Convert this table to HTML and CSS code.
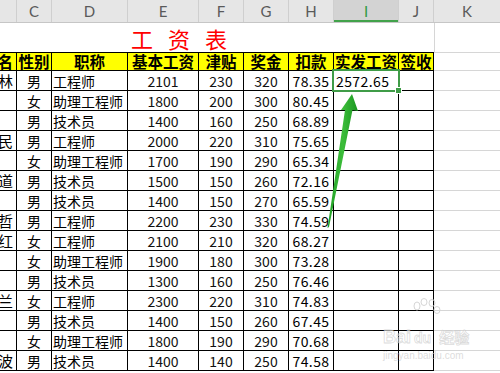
FILE: index.html
```html
<!DOCTYPE html>
<html>
<head>
<meta charset="utf-8">
<link rel="stylesheet" href="styles.css">
</head>
<body>
<div class="sheet">
  <div class="colhead">
    <div class="ch"></div><div class="ch">C</div><div class="ch">D</div><div class="ch">E</div><div class="ch">F</div><div class="ch">G</div><div class="ch">H</div><div class="ch sel">I</div><div class="ch">J</div><div class="ch last">K</div>
  </div>
  <div class="title-row">
    <div class="title"><span>工</span><span>资</span><span>表</span></div>
    <div class="k kt"></div>
  </div>
  <div class="row head">
    <div class="c b">名</div><div class="c">性别</div><div class="c">职称</div><div class="c">基本工资</div><div class="c">津贴</div><div class="c">奖金</div><div class="c">扣款</div><div class="c">实发工资</div><div class="c">签收</div><div class="k"></div>
  </div>
  <div class="row"><div class="c b">林</div><div class="c">男</div><div class="c l">工程师</div><div class="c n">2101</div><div class="c n">230</div><div class="c n">320</div><div class="c m">78.35</div><div class="c l m">2572.65</div><div class="c"></div><div class="k"></div></div>
  <div class="row"><div class="c b"></div><div class="c">女</div><div class="c l">助理工程师</div><div class="c n">1800</div><div class="c n">200</div><div class="c n">300</div><div class="c m">80.45</div><div class="c"></div><div class="c"></div><div class="k"></div></div>
  <div class="row"><div class="c b"></div><div class="c">男</div><div class="c l">技术员</div><div class="c n">1400</div><div class="c n">160</div><div class="c n">250</div><div class="c m">68.89</div><div class="c"></div><div class="c"></div><div class="k"></div></div>
  <div class="row"><div class="c b">民</div><div class="c">男</div><div class="c l">工程师</div><div class="c n">2000</div><div class="c n">220</div><div class="c n">310</div><div class="c m">75.65</div><div class="c"></div><div class="c"></div><div class="k"></div></div>
  <div class="row"><div class="c b"></div><div class="c">女</div><div class="c l">助理工程师</div><div class="c n">1700</div><div class="c n">190</div><div class="c n">290</div><div class="c m">65.34</div><div class="c"></div><div class="c"></div><div class="k"></div></div>
  <div class="row"><div class="c b">道</div><div class="c">男</div><div class="c l">技术员</div><div class="c n">1500</div><div class="c n">150</div><div class="c n">260</div><div class="c m">72.16</div><div class="c"></div><div class="c"></div><div class="k"></div></div>
  <div class="row"><div class="c b"></div><div class="c">男</div><div class="c l">技术员</div><div class="c n">1400</div><div class="c n">150</div><div class="c n">270</div><div class="c m">65.59</div><div class="c"></div><div class="c"></div><div class="k"></div></div>
  <div class="row"><div class="c b">哲</div><div class="c">男</div><div class="c l">工程师</div><div class="c n">2200</div><div class="c n">230</div><div class="c n">330</div><div class="c m">74.59</div><div class="c"></div><div class="c"></div><div class="k"></div></div>
  <div class="row"><div class="c b">红</div><div class="c">女</div><div class="c l">工程师</div><div class="c n">2100</div><div class="c n">210</div><div class="c n">320</div><div class="c m">68.27</div><div class="c"></div><div class="c"></div><div class="k"></div></div>
  <div class="row"><div class="c b"></div><div class="c">女</div><div class="c l">助理工程师</div><div class="c n">1900</div><div class="c n">180</div><div class="c n">300</div><div class="c m">73.28</div><div class="c"></div><div class="c"></div><div class="k"></div></div>
  <div class="row"><div class="c b"></div><div class="c">男</div><div class="c l">技术员</div><div class="c n">1300</div><div class="c n">160</div><div class="c n">250</div><div class="c m">76.46</div><div class="c"></div><div class="c"></div><div class="k"></div></div>
  <div class="row"><div class="c b">兰</div><div class="c">女</div><div class="c l">工程师</div><div class="c n">2300</div><div class="c n">220</div><div class="c n">310</div><div class="c m">74.83</div><div class="c"></div><div class="c"></div><div class="k"></div></div>
  <div class="row"><div class="c b"></div><div class="c">男</div><div class="c l">技术员</div><div class="c n">1400</div><div class="c n">150</div><div class="c n">260</div><div class="c m">67.45</div><div class="c"></div><div class="c"></div><div class="k"></div></div>
  <div class="row"><div class="c b"></div><div class="c">女</div><div class="c l">助理工程师</div><div class="c n">1800</div><div class="c n">190</div><div class="c n">290</div><div class="c m">70.68</div><div class="c"></div><div class="c"></div><div class="k"></div></div>
  <div class="row"><div class="c b">波</div><div class="c">男</div><div class="c l">技术员</div><div class="c n">1400</div><div class="c n">140</div><div class="c n">250</div><div class="c m">74.58</div><div class="c"></div><div class="c"></div><div class="k"></div></div>
</div>

<div class="selection"><span class="handle"></span></div>

<svg class="arrow" width="500" height="373" viewBox="0 0 500 373">
  <defs>
    <linearGradient id="g" x1="0" y1="0" x2="1" y2="0">
      <stop offset="0" stop-color="#1f9e24"/>
      <stop offset="0.5" stop-color="#3cbd3a"/>
      <stop offset="1" stop-color="#1a9620"/>
    </linearGradient>
  </defs>
  <polygon points="352,94 358,111 352.5,110 329,227 327.5,228 345,110 341,110" fill="url(#g)"/>
</svg>

<div class="watermark">
  <svg class="paw" width="30" height="28" viewBox="0 0 30 28">
    <g fill="none" stroke="#d6d6d6" stroke-width="1">
      <ellipse cx="6" cy="8" rx="3" ry="4"/>
      <ellipse cx="13" cy="4" rx="3" ry="3.5"/>
      <ellipse cx="21" cy="5" rx="3" ry="3.5"/>
      <ellipse cx="26" cy="12" rx="3" ry="3.5"/>
    </g>
  </svg>
  <div class="wm-line"><span class="bai">Bai</span><span class="du">du</span><span class="jy">经验</span></div>
  <div class="wm-url">jingyan.baidu.com</div>
</div>
</body>
</html>
```
FILE: styles.css
```css
:root {
  --cols: 17px 35px 76px 71px 45px 45px 45px 65px 35px 1fr;
}
html, body {
  margin: 0;
  padding: 0;
}
body {
  width: 500px;
  height: 373px;
  overflow: hidden;
  position: relative;
  background: #ffffff;
  font-family: "Noto Sans CJK SC", sans-serif;
  color: #000;
}
.sheet {
  display: flex;
  flex-direction: column;
}
.colhead {
  display: grid;
  grid-template-columns: var(--cols);
  height: 23px;
  box-sizing: border-box;
  background: #e6e6e6;
  border-bottom: 1px solid #c6c6c6;
}
.ch {
  display: flex;
  align-items: center;
  justify-content: center;
  border-right: 1px solid #cfcfcf;
  font-family: Lato, "Liberation Sans", sans-serif;
  font-size: 15px;
  color: #5a5a5a;
}
.ch.last {
  border-right: none;
}
.ch.sel {
  background: #d3d3d3;
  color: #2f9a3f;
  box-shadow: inset 0 -2px 0 #42a24b;
}
.title-row {
  display: grid;
  grid-template-columns: 434px 1fr;
  height: 30px;
}
.title {
  display: flex;
  align-items: center;
  gap: 15px;
  padding-left: 131px;
  box-sizing: border-box;
  border-bottom: 1px solid #000;
  color: #ff0000;
  font-size: 22px;
  line-height: 1;
}
.row {
  display: grid;
  grid-template-columns: var(--cols);
  height: 20px;
}
.row.head {
  height: 18px;
}
.c {
  display: flex;
  align-items: center;
  justify-content: center;
  box-sizing: border-box;
  border-right: 1px solid #000;
  border-bottom: 1px solid #000;
  font-size: 14px;
  line-height: 1;
  white-space: nowrap;
}
.c.b {
  justify-content: flex-end;
  padding-right: 3px;
  font-size: 15px;
  overflow: hidden;
}
.c.l {
  justify-content: flex-start;
  padding-left: 1px;
}
.c.m.l {
  padding-left: 2px;
}
.c.n {
  color: #111;
}
.c.m {
  letter-spacing: 0.4px;
}
.head .c {
  background: #ffff00;
  font-weight: 700;
  font-size: 15.5px;
}
.k {
  border-bottom: 1px solid #d6d6d6;
}
.k.kt {
  border-left: 1px solid #d6d6d6;
}
.selection {
  position: absolute;
  left: 332px;
  top: 69px;
  width: 68px;
  height: 23px;
  box-sizing: border-box;
  border: 2px solid #3f9c47;
}
.handle {
  position: absolute;
  left: 62px;
  top: 17px;
  width: 5px;
  height: 5px;
  background: #3f9c47;
  outline: 1px solid #ffffff;
}
.arrow {
  position: absolute;
  left: 0;
  top: 0;
  pointer-events: none;
}
.watermark {
  position: absolute;
  left: 383px;
  top: 298px;
  width: 92px;
  pointer-events: none;
}
.paw {
  position: absolute;
  left: 28px;
  top: 0;
}
.wm-line {
  position: absolute;
  left: 0;
  top: 30px;
  display: flex;
  align-items: baseline;
  font-family: "Liberation Sans", sans-serif;
  font-weight: 700;
  font-size: 18px;
  line-height: 1;
  color: rgba(255, 255, 255, 0.5);
  -webkit-text-stroke: 0.8px rgba(190, 190, 190, 0.55);
}
.du {
  font-size: 14px;
  margin-left: 3px;
}
.jy {
  font-family: "Noto Sans CJK SC", sans-serif;
  font-size: 15px;
  margin-left: 8px;
}
.wm-url {
  position: absolute;
  left: 0;
  top: 52px;
  font-family: "Liberation Sans", sans-serif;
  font-size: 10px;
  color: rgba(205, 205, 205, 0.7);
  white-space: nowrap;
}
```
